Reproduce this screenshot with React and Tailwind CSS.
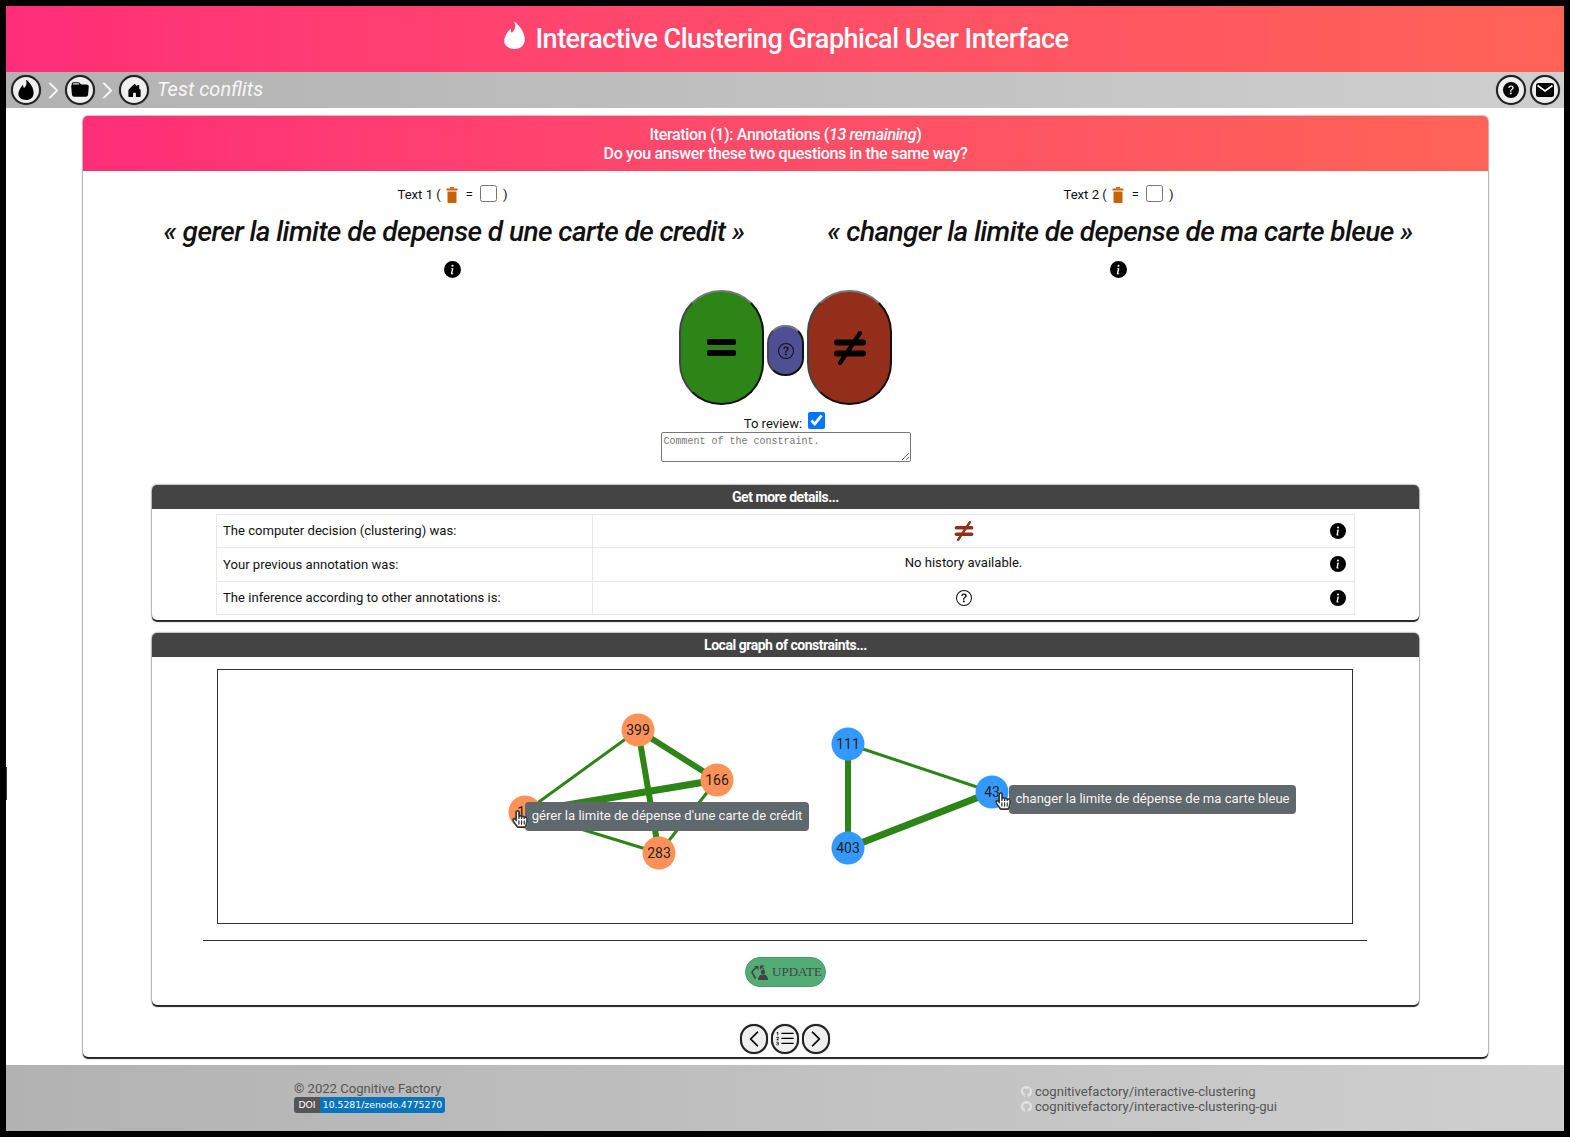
import React from 'react';
import { BsFolderFill, BsHouseDoorFill, BsChevronRight, BsChevronLeft, BsQuestionCircleFill, BsQuestionCircle, BsInfoCircleFill, BsListOl, BsGithub } from 'react-icons/bs';
import { SiTinder } from 'react-icons/si';
import { FaHandPointer, FaRegHandPointer } from 'react-icons/fa';

const GREEN = '#2e8517';

function RoundBtn({ children, w = 'w-[30px]' }) {
  return (
    <div className={`${w} h-[30px] rounded-full bg-[#efefef] border-2 border-[#222] flex items-center justify-center shadow-[0_0_1px_#555]`}>
      {children}
    </div>
  );
}

function Neq({ color = '#000', w = 32, h = 34, t = 6 }) {
  return (
    <svg width={w} height={h} viewBox="0 0 32 34" fill="none" stroke={color}>
      <path d="M3 11.5h26M3 22.5h26" strokeWidth={t} strokeLinecap="round" />
      <path d="M26 2 6 32" strokeWidth={t * 0.7} strokeLinecap="round" />
    </svg>
  );
}

function Trash() {
  return (
    <svg width="12" height="16" viewBox="0 0 12 16" fill="#c4630a" className="inline-block">
      <rect x="4" y="0" width="4" height="1.5" />
      <rect x="0.5" y="1.5" width="11" height="2" />
      <path d="M1.5 4.5h9V15a1 1 0 0 1-1 1h-7a1 1 0 0 1-1-1z" />
    </svg>
  );
}

function Mail() {
  return (
    <svg width="18" height="14" viewBox="0 0 18 14">
      <rect x="0" y="0" width="18" height="14" rx="2.5" fill="#000" />
      <path d="M1.5 2.5 9 8l7.5-5.5" fill="none" stroke="#fff" strokeWidth="1.8" />
    </svg>
  );
}

function TextColumn({ n, quote }) {
  return (
    <div className="w-1/2 flex flex-col items-center">
      <div className="h-[24px] flex items-center text-[13.1px] text-[#111] gap-[5.5px]">
        <span>Text {n} (</span>
        <Trash />
        <span className="mx-[2px]">=</span>
        <input type="checkbox" readOnly className="w-[17px] h-[17px] m-0 mb-[3px]" />
        <span>)</span>
      </div>
      <div className="mt-[5px] ml-[3px] h-[40px] flex items-center text-[28px] italic font-medium text-[#111] tracking-[-0.57px] whitespace-nowrap">{quote}</div>
      <div className="mt-[9px] h-[17px]"><BsInfoCircleFill size={17} color="#000" /></div>
    </div>
  );
}

function Row({ label, children, last }) {
  return (
    <div className={`flex h-[33.3px] ${last ? '' : 'border-b border-[#e8e8e8]'}`}>
      <div className="w-[376px] border-r border-[#e8e8e8] pl-[6px] flex items-center text-[13.1px] text-[#111]">{label}</div>
      <div className="flex-1 flex items-center pl-[4px]">
        <div className="flex-1 flex justify-center text-[13.1px] text-[#111]">{children}</div>
        <BsInfoCircleFill size={16} color="#000" className="mr-[8px]" />
      </div>
    </div>
  );
}

function Panel({ title, children }) {
  return (
    <div className="mx-[69px] bg-white rounded-[5px] shadow-[0_2px_1px_#222,0_0_2px_#333] overflow-hidden">
      <div className="h-[24px] bg-[#444444] text-white text-[14px] font-bold tracking-[-0.47px] flex items-center justify-center">{title}</div>
      {children}
    </div>
  );
}

function Cursor({ x, y }) {
  return (
    <div className="absolute w-[18px] h-[18px]" style={{ left: x, top: y }}>
      <FaHandPointer size={18} color="#fff" className="absolute left-0 top-0" />
      <FaRegHandPointer size={18} color="#333" className="absolute left-0 top-0" />
    </div>
  );
}

const OX = 218;
const OY = 669;
const edges = [
  [638, 729, 525, 811, 3],
  [638, 729, 717, 779, 6],
  [638, 729, 659, 852, 6],
  [717, 779, 525, 811, 7],
  [717, 779, 659, 852, 3],
  [525, 811, 659, 852, 3],
  [848, 743, 992, 791, 3],
  [848, 743, 848, 847, 6],
  [992, 791, 848, 847, 7],
];
const nodes = [
  [638, 729, '399', '#ff9159'],
  [717, 779, '166', '#ff9159'],
  [525, 811, '19', '#ff9159'],
  [659, 852, '283', '#ff9159'],
  [848, 743, '111', '#3399ff'],
  [992, 791, '43', '#3399ff'],
  [848, 847, '403', '#3399ff'],
];

function Tip({ x, y, w, children }) {
  return (
    <div
      className="absolute h-[29px] pb-[2px] bg-[#5f686d] rounded-[4px] text-[13.1px] text-[#f5f5f5] flex items-center justify-center whitespace-nowrap"
      style={{ left: x - OX, top: y - OY, width: w }}
    >
      {children}
    </div>
  );
}

export default function App() {
  return (
    <div className="w-[1570px] h-[1137px] bg-black pt-[6px] px-[6px] pb-[6px] font-['Roboto',sans-serif] relative">
      <div className="absolute left-[6px] top-[767px] w-[1px] h-[33px] bg-[#3a4040]" />
      <div className="h-full flex flex-col bg-white">
        <header className="h-[66px] bg-gradient-to-r from-[#ff2d78] to-[#ff6356] flex items-center justify-center gap-[7px] pt-[1px] text-white text-[27px] font-medium tracking-[-0.5px]">
          <SiTinder size={27} className="mb-[8px]" />
          <span>Interactive Clustering Graphical User Interface</span>
        </header>
        <nav className="h-[36px] bg-gradient-to-r from-[#b2b2b2] to-[#cfcfcf] flex items-center pl-[5px] pr-[4px]">
          <RoundBtn><SiTinder size={20} color="#000" /></RoundBtn>
          <BsChevronRight size={19} color="#fff" stroke="#fff" strokeWidth={0.7} className="mx-[2.5px]" />
          <RoundBtn><BsFolderFill size={18} color="#000" /></RoundBtn>
          <BsChevronRight size={19} color="#fff" stroke="#fff" strokeWidth={0.7} className="mx-[2.5px]" />
          <RoundBtn><BsHouseDoorFill size={15} color="#000" /></RoundBtn>
          <span className="ml-[8px] mb-[2px] text-[20px] italic text-[#f6f6f6]">Test conflits</span>
          <div className="ml-auto flex gap-[4px]">
            <RoundBtn><BsQuestionCircleFill size={16} color="#000" /></RoundBtn>
            <RoundBtn><Mail /></RoundBtn>
          </div>
        </nav>
        <main className="flex-1 pt-[8px] pb-[8px] pl-[77px] pr-[76px]">
          <div className="h-full bg-white rounded-[5px] shadow-[0_2px_1px_#222,0_0_2px_#333] overflow-hidden">
            <div className="h-[55px] bg-gradient-to-r from-[#ff2d78] to-[#ff6356] flex flex-col items-center justify-center text-white text-[16px] font-medium leading-[19px] tracking-[-0.33px]">
              <div>Iteration (1): Annotations (<i>13 remaining</i>)</div>
              <div>Do you answer these two questions in the same way?</div>
            </div>

            <div className="flex px-[36.5px] pt-[12px]">
              <TextColumn n={1} quote="« gerer la limite de depense d une carte de credit »" />
              <TextColumn n={2} quote="« changer la limite de depense de ma carte bleue »" />
            </div>

            <div className="mt-[12px] h-[115px] flex items-center justify-center gap-[3px]">
              <div className="w-[85px] h-[115px] rounded-[42px] bg-[#2e8517] border-2 border-t-[#777] border-l-[#444] border-b-[#111] border-r-[#111] flex items-center justify-center">
                <svg width="32" height="24" viewBox="0 0 32 24" fill="#000" className="mt-[1px]">
                  <rect x="1" y="3" width="29" height="6" rx="2" />
                  <rect x="1" y="14" width="29" height="6" rx="2" />
                </svg>
              </div>
              <div className="mt-[6px] w-[37px] h-[51px] rounded-[18px] bg-[#4e5093] border-2 border-t-[#777] border-l-[#444] border-b-[#111] border-r-[#111] flex items-center justify-center">
                <BsQuestionCircle size={16} color="#111" />
              </div>
              <div className="w-[85px] h-[115px] rounded-[42px] bg-[#922e1a] border-2 border-t-[#777] border-l-[#444] border-b-[#111] border-r-[#111] flex items-center justify-center">
                <Neq />
              </div>
            </div>

            <div className="mt-[7px] pr-[2px] flex items-end justify-center gap-[6px] h-[17px] text-[13.1px] text-[#111]">
              <span className="leading-[14px] mb-[-2px]">To review:</span>
              <input type="checkbox" defaultChecked className="w-[17px] h-[17px] m-0" />
            </div>
            <div className="mt-[3px] flex justify-center">
              <textarea
                readOnly
                placeholder="Comment of the constraint."
                className="block w-[250px] h-[30px] border border-[#777] rounded-[2px] px-[2px] pt-[2px] pb-0 text-[10px] leading-[13px] font-['Liberation_Mono',monospace] placeholder:text-[#777] bg-white"
              />
            </div>

            <div className="mt-[23px]">
              <Panel title="Get more details...">
                <div className="pt-[5px] pb-[5px] px-[64px] h-[111px]">
                  <div className="h-full border border-[#e8e8e8]">
                    <Row label="The computer decision (clustering) was:"><Neq color="#922e1a" w={20} h={20} t={6} /></Row>
                    <Row label="Your previous annotation was:"><span className="mb-[4px]">No history available.</span></Row>
                    <Row label="The inference according to other annotations is:" last><BsQuestionCircle size={16} color="#111" /></Row>
                  </div>
                </div>
              </Panel>
            </div>

            <div className="mt-[13px]">
              <Panel title="Local graph of constraints...">
                <div className="h-[348px] pl-[65px] pr-[66px] pt-[12px]">
                  <div className="relative h-[255px] border border-[#333]">
                    <svg className="absolute left-0 top-0" width="1133" height="253">
                      <g transform={`translate(${-OX} ${-OY})`}>
                        {edges.map(([a, b, c, d, w], i) => (
                          <line key={i} x1={a} y1={b} x2={c} y2={d} stroke={GREEN} strokeWidth={w} />
                        ))}
                        {nodes.map(([x, y, t, c]) => (
                          <g key={t}>
                            <circle cx={x} cy={y} r="16.5" fill={c} />
                            <text x={x} y={y + 5} textAnchor="middle" fontSize="14" fill="#222">{t}</text>
                          </g>
                        ))}
                      </g>
                    </svg>
                    <Tip x={525} y={801} w={284}>gérer la limite de dépense d'une carte de crédit</Tip>
                    <Tip x={1009} y={784} w={287}>changer la limite de dépense de ma carte bleue</Tip>
                    <Cursor x={511 - OX} y={809 - OY} />
                    <Cursor x={994 - OX} y={791 - OY} />
                  </div>
                  <div className="mt-[16px] mx-[-14px] border-t border-[#333]" />
                  <div className="mt-[16px] flex justify-center">
                    <div className="w-[81px] h-[30px] rounded-full bg-[#53ab76] border border-[#4a9a6a] pl-[3px] flex items-center justify-center gap-[4px] text-[13px] text-[#444] font-['Liberation_Serif',serif]">
                      <svg width="17" height="15" viewBox="0 0 17 15" fill="#444">
                        <circle cx="12" cy="7" r="2.2" />
                        <path d="M7 15c0-3.5 2-5.5 5-5.5s5 2 5 5.5z" />
                        <path d="M5 2.5 2 5.5c-1 1-1 2.5 0 3.5l2.5 4.5" fill="none" stroke="#444" strokeWidth="1.7" />
                        <path d="M3 1h4.5v4.2z" />
                        <path d="M13 1.2H9.5v3.4M9.5 1.2l3.5 3.2" fill="none" stroke="#444" strokeWidth="1.2" />
                      </svg>
                      <span>UPDATE</span>
                    </div>
                  </div>
                </div>
              </Panel>
            </div>

            <div className="mt-[19px] pr-[1px] flex justify-center gap-[3px]">
              <RoundBtn w="w-[28px]"><BsChevronLeft size={18} color="#000" stroke="#000" strokeWidth={0.6} /></RoundBtn>
              <RoundBtn w="w-[28px]"><BsListOl size={20} color="#000" /></RoundBtn>
              <RoundBtn w="w-[28px]"><BsChevronRight size={18} color="#000" stroke="#000" strokeWidth={0.6} /></RoundBtn>
            </div>
          </div>
        </main>
        <footer className="h-[66px] bg-gradient-to-r from-[#b2b2b2] to-[#cfcfcf] flex text-[13.1px] text-[#555]">
          <div className="w-[1015px] pl-[288px] pt-[15px]">
            <div className="leading-[17px]">© 2022 Cognitive Factory</div>
            <div className="flex w-[151px] h-[16px] rounded-[3px] overflow-hidden text-[9.3px] text-white font-['DejaVu_Sans',sans-serif]">
              <span className="w-[26px] shrink-0 bg-[#555] flex items-center justify-center">DOI</span>
              <span className="flex-1 bg-[#0874bb] flex items-center justify-center whitespace-nowrap">10.5281/zenodo.4775270</span>
            </div>
          </div>
          <div className="pt-[19px] leading-[15px]">
            <div className="flex items-center gap-[3px]"><BsGithub size={11} color="#e4e4e4" />cognitivefactory/interactive-clustering</div>
            <div className="flex items-center gap-[3px]"><BsGithub size={11} color="#e4e4e4" />cognitivefactory/interactive-clustering-gui</div>
          </div>
        </footer>
      </div>
    </div>
  );
}
